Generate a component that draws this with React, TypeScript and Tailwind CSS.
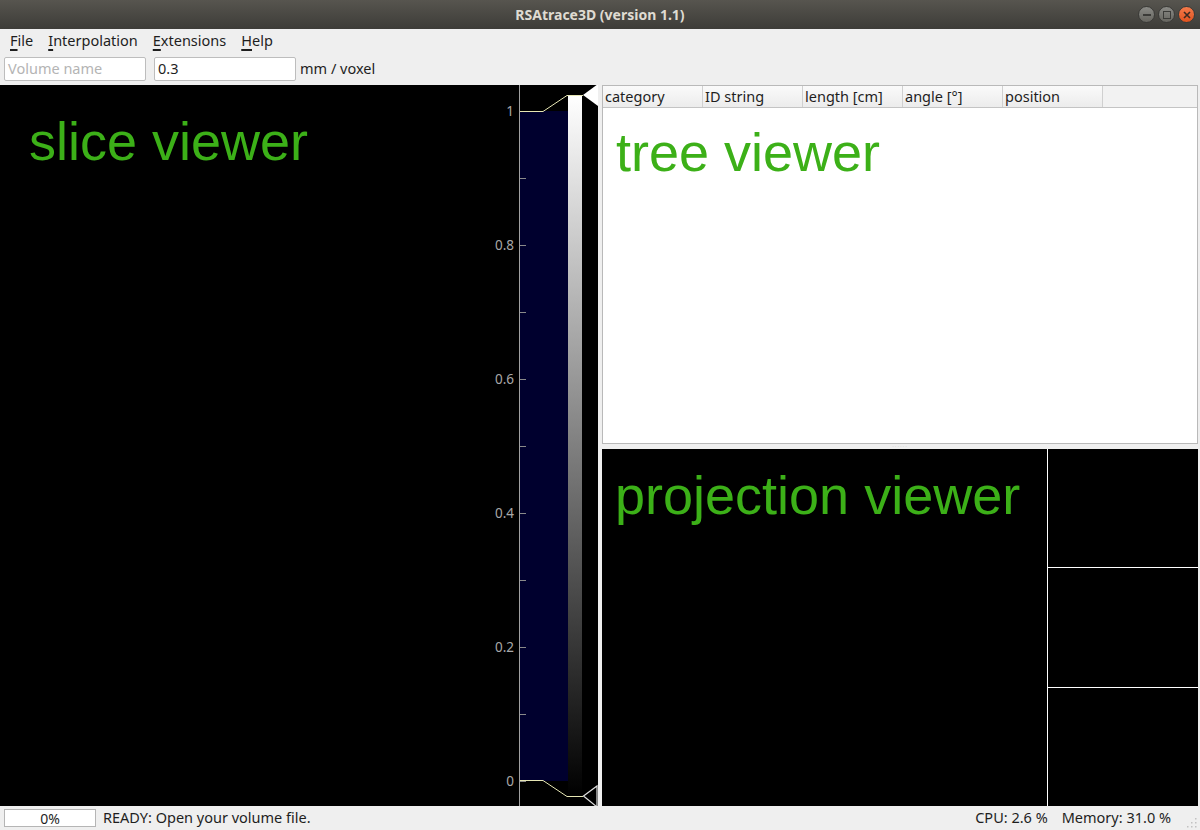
import React from 'react';

const ui = { fontFamily: '"Noto Sans", "Open Sans", sans-serif' };
const big = { fontFamily: '"Liberation Sans", Arial, sans-serif' };

function TitleBar() {
  return (
    <div className="relative flex h-[29px] items-center justify-center bg-gradient-to-b from-[#57554f] to-[#3d3c38]">
      <span className="text-[14px] font-bold text-[#dfdbd2]" style={ui}>
        RSAtrace3D (version 1.1)
      </span>
      <div className="absolute right-[5px] top-[6px] flex gap-[3px]">
        <span className="flex h-[17px] w-[17px] items-center justify-center rounded-full border border-[#3a3a37] bg-gradient-to-b from-[#8a8a86] to-[#66655f]">
          <span className="h-[2px] w-[8px] bg-[#3b3b38]" />
        </span>
        <span className="flex h-[17px] w-[17px] items-center justify-center rounded-full border border-[#3a3a37] bg-gradient-to-b from-[#8a8a86] to-[#66655f]">
          <span className="h-[8px] w-[8px] border-[1.5px] border-[#3b3b38]" />
        </span>
        <span className="flex h-[17px] w-[17px] items-center justify-center rounded-full border border-[#3a3a37] bg-gradient-to-b from-[#f47a4a] to-[#e0521d]">
          <svg width="8" height="8" viewBox="0 0 8 8">
            <path d="M1 1 L7 7 M7 1 L1 7" stroke="#3b2a22" strokeWidth="1.6" />
          </svg>
        </span>
      </div>
    </div>
  );
}

function MenuBar() {
  const items = [
    ['F', 'ile'],
    ['I', 'nterpolation'],
    ['E', 'xtensions'],
    ['H', 'elp'],
  ];
  return (
    <div className="flex h-[23px] items-center gap-[15px] bg-[#efefef] pl-[10px] text-[14.5px] text-[#1e1e1e]" style={ui}>
      {items.map(([a, b]) => (
        <span key={a + b}>
          <span className="underline decoration-[1.5px] underline-offset-[3px]">{a}</span>
          {b}
        </span>
      ))}
    </div>
  );
}

function ToolBar() {
  return (
    <div className="flex h-[33px] items-center gap-[8px] bg-[#efefef] pl-[4px] text-[14.5px] text-[#1e1e1e]" style={ui}>
      <div className="flex h-[24px] w-[142px] items-center rounded-[2px] border border-[#bdbdbd] bg-white pl-[3px] text-[#b4b4b4]">
        Volume name
      </div>
      <div className="flex h-[24px] w-[142px] items-center rounded-[2px] border border-[#bdbdbd] bg-white pl-[3px]">
        0.3
      </div>
      <span className="-ml-[4px]">mm / voxel</span>
    </div>
  );
}

function ColorBar() {
  const labels = [
    ['1', 26],
    ['0.8', 160],
    ['0.6', 294],
    ['0.4', 428],
    ['0.2', 562],
    ['0', 696],
  ] as const;
  const ticks = Array.from({ length: 11 }, (_, i) => 26 + i * 67);
  return (
    <svg width="118" height="721" viewBox="0 0 118 721" className="block shrink-0">
      <defs>
        <linearGradient id="gray" x1="0" y1="0" x2="0" y2="1">
          <stop offset="0" stopColor="#ffffff" />
          <stop offset="1" stopColor="#000000" />
        </linearGradient>
      </defs>
      <rect x="40" y="26" width="48" height="670" fill="#00002e" />
      <rect x="88" y="10" width="14" height="701" fill="url(#gray)" />
      <line x1="39.5" y1="0" x2="39.5" y2="721" stroke="#a0a0a0" />
      {ticks.map((y) => (
        <line key={y} x1="40" y1={y + 0.5} x2="46" y2={y + 0.5} stroke="#8a8a8a" />
      ))}
      {labels.map(([t, y]) => (
        <text
          key={t}
          x="34"
          y={y + 5}
          textAnchor="end"
          fontSize="13.5"
          fill="#a8a8a8"
          fontFamily='"Noto Sans", sans-serif'
        >
          {t}
        </text>
      ))}
      <polyline points="40,26.5 63,26.5 87,10.5 103,10.5" fill="none" stroke="#e6e6b4" strokeWidth="1" />
      <polyline points="40,695.5 63,695.5 87,711.5 103,711.5" fill="none" stroke="#e6e6b4" strokeWidth="1" />
      <polygon points="103,10 118,-1 118,21" fill="#ffffff" />
      <polygon points="103.5,711 117,701 117,722" fill="none" stroke="#e0e0e0" strokeWidth="1.2" />
    </svg>
  );
}

function SliceViewer() {
  return (
    <div className="flex w-[598px] shrink-0 bg-black">
      <div className="flex-1 pl-[29px] pt-[29px]">
        <div className="text-[54px] leading-[54px] text-[#3cb018]" style={big}>
          slice viewer
        </div>
      </div>
      <ColorBar />
    </div>
  );
}

function TreeViewer() {
  const cols = ['category', 'ID string', 'length [cm]', 'angle [°]', 'position'];
  return (
    <div className="flex h-[359px] flex-col border border-[#b9b9b9] bg-white">
      <div className="flex h-[22px] shrink-0 border-b border-[#c4c4c4] bg-[#f2f2f2] text-[14.5px] text-[#1e1e1e]" style={ui}>
        {cols.map((c) => (
          <div
            key={c}
            className="flex w-[100px] items-center border-r border-[#d0d0d0] bg-gradient-to-b from-[#fafafa] to-[#ececec] pl-[2px]"
          >
            {c}
          </div>
        ))}
      </div>
      <div className="pl-[13px] pt-[17px]">
        <div className="text-[54px] leading-[54px] text-[#3cb018]" style={big}>
          tree viewer
        </div>
      </div>
    </div>
  );
}

function ProjectionViewer() {
  return (
    <div className="flex flex-1 bg-black">
      <div className="flex-1 pl-[13px] pt-[19px]">
        <div className="text-[54px] leading-[54px] text-[#3cb018]" style={big}>
          projection viewer
        </div>
      </div>
      <div className="flex w-[151px] flex-col border-l border-white">
        <div className="flex-1" />
        <div className="flex-1 border-t border-white" />
        <div className="flex-1 border-t border-white" />
      </div>
    </div>
  );
}

function StatusBar() {
  return (
    <div className="flex h-[24px] items-center bg-[#efefef] pl-[4px] text-[14.5px] text-[#1e1e1e]" style={ui}>
      <div className="flex h-[18px] w-[92px] items-center justify-center border border-[#b5b5b5] bg-white text-[14px]">
        0%
      </div>
      <span className="ml-[7px]">READY: Open your volume file.</span>
      <span className="ml-auto">CPU: 2.6 %</span>
      <span className="ml-[14px]">Memory: 31.0 %</span>
      <svg width="29" height="24" viewBox="0 0 29 24" className="shrink-0">
        {[
          [24, 20],
          [20, 20],
          [16, 20],
          [24, 16],
          [20, 16],
          [24, 12],
        ].map(([x, y]) => (
          <rect key={`${x}-${y}`} x={x} y={y} width="1.5" height="1.5" fill="#c2c2c2" />
        ))}
      </svg>
    </div>
  );
}

export default function App() {
  return (
    <div className="flex h-[830px] w-[1200px] flex-col overflow-hidden bg-[#efefef]">
      <TitleBar />
      <MenuBar />
      <ToolBar />
      <div className="flex h-[721px]">
        <SliceViewer />
        <div className="w-[4px] shrink-0 bg-[#efefef]" />
        <div className="flex flex-1 flex-col pr-[2px]">
          <TreeViewer />
          <div className="flex h-[5px] shrink-0 items-center justify-center">
            <span className="text-[6px] leading-[5px] tracking-[1px] text-[#c8c8c8]">······</span>
          </div>
          <ProjectionViewer />
        </div>
      </div>
      <StatusBar />
    </div>
  );
}
